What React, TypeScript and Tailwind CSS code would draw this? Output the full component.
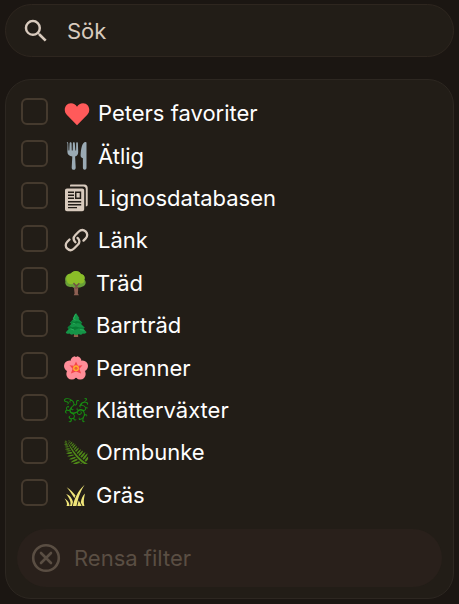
import type { ReactNode } from "react";
import { GiCurlingVines, GiFern, GiHighGrass } from "react-icons/gi";
import { MdSearch } from "react-icons/md";

function Heart() {
  return (
    <svg viewBox="0 0 26 26" className="size-[27px]" fill="#ff5a5a">
      <path d="M13.5 24.2 3.6 14.2C-.1 10.3 1.8 3.2 7.7 3.1c2.600 0 4.500 1.300 5.800 3.300 1.300-2 3.200-3.300 5.800-3.300 5.900.1 7.800 7.200 4.100 11.100Z" />
    </svg>
  );
}

function Cutlery() {
  return (
    <svg viewBox="0 0 26 28" className="h-[28px] w-[26px]" fill="#9aaab4">
      <path d="M4.300.3c.7 0 .9.500.9 1.200l.3 7h.8L6.600 1.500C6.600.8 7 .3 7.600.3s1 .5 1 1.200l.2 7h.9l.2-7c0-.7.300-1.200 1-1.200.600 0 .9.500.9 1.200l.6 7h.7l.1-7c0-.7.3-1.200.8-1.200.600 0 .9.500.9 1.200l.3 8.500c0 2.500-1.200 3.900-3.100 4.500l.6 11c0 1.500-.7 2.300-2 2.300s-2-.8-2-2.300l.6-11c-2.900-.600-4.900-2-4.900-4.500l.1-8.500C3.500.8 3.800.3 4.300.3Z" />
      <path d="M22.600 0c.5 0 .9.400.9 1v24.800c0 1.300-.7 2-1.800 2s-1.800-.7-1.800-2v-9.600c-1.700-.5-2.500-1.500-2.300-3.200C18 7 19 0 22.600 0Z" />
    </svg>
  );
}

function Papers() {
  return (
    <svg viewBox="0 0 26 28" className="h-[28px] w-[26px]" fill="#d8cabd">
      <path d="M7 1.500C7 1 7.500.5 8 .5h13.500c1.900 0 3.200 1.300 3.200 3.200v17.100c0 1-.8 1.700-1.900 1.700V5c0-1.500-1-2.500-2.500-2.500H7Z" />
      <path fillRule="evenodd" d="M4 4.500h15.200c1.200 0 2 .8 2 2v18.800c0 1.200-.8 2-2 2H4c-1.200 0-2-.8-2-2V6.500c0-1.200.8-2 2-2Zm1 3v1.500h6V7.500Zm0 3v1.500h6v-1.500Zm0 3v1.500h6v-1.500Zm7-6v7.500h6.200V7.500Zm1.500 1.500h3.200v4.500h-3.200Zm-8.500 8v1.500h13.200v-1.500Zm0 3v1.500h13.200v-1.500Zm0 3v1.300h9v-1.300Z" />
    </svg>
  );
}

function Chain() {
  return (
    <svg viewBox="0 0 26 26" className="size-[26px]" fill="none" stroke="#d8cabd" strokeWidth="2.300" strokeLinecap="round">
      <path d="M12.400 15.200C10.200 13 10 10.600 12.200 8.300l3.400-3.500c2.200-2.200 5-2.200 7-.4 2.100 2 2.100 4.900.1 7L20.500 13.600" />
      <path d="M14.600 10.900c2.300 2.200 2.400 4.700.2 6.900l-3.500 3.500c-2.200 2.200-5 2.300-7 .4-2.100-2-2.100-4.900 0-7l2.200-2.200" />
    </svg>
  );
}

function Oak() {
  return (
    <svg viewBox="0 0 26 26" className="size-[26px]">
      <path d="M10.500 14h5l-.6 9.500 1 1.700h-5.200l.9-1.700Z" fill="#8d5f52" />
      <path d="M12 18 7 14.500M14 18l5-4" stroke="#765044" strokeWidth="1.500" />
      <path d="M8 3.600c2-3.700 8.200-3.300 9.900.3 3.300.5 4.500 3.400 3.600 5.700 2.500 2.700.8 6.900-2.500 7.200-1.800 1.400-4 .7-5-.6-1.500 1.600-3.700 1.700-5 .5C5.600 18 1.500 15.600 2.400 11.500 1.200 7.500 4 3.700 8 3.600Z" fill="#689f38" />
      <path d="M8 3.600c2-3.700 8.200-3.300 9.900.3 3.300.5 4.500 3.400 3.200 5.700.7 2.800-1.800 4.700-4.300 3.600-1.900 1.600-4.400 1.300-5.600-.3-2.300 2.300-6.200 1.700-7.200-1.400C2 7.500 4 3.700 8 3.600Z" fill="#8abd28" />
      <path d="m13 16-2.500-3M13.500 16l2.800-2.700M13 15v4" stroke="#765044" strokeWidth="1.300" />
    </svg>
  );
}

function Fir() {
  return (
    <svg viewBox="0 0 26 26" className="size-[26px]">
      <path d="M11.200 19h3.600l.4 6h-4.400Z" fill="#8d6048" />
      <path d="m13 1 3.500 5.300-1 .5 3.800 4-1.500.9 4 4.100-1.600.9 3.300 3.400c-.3 1.600-2.300 2-3.600 1.300-1.200 1.500-2.900 1.600-4 .6-1.600 1.500-4 1.400-5.400 0-1.500 1-3.100.8-4-.5-1.400.7-3.400.2-3.700-1.300l3.200-3.500-1.600-.9 4-4.100-1.500-.9 3.700-4-1-.5Z" fill="#159447" />
      <path d="m8 8.800 3.200 1 2.500-.8 3 .8 2.600 1-1.500.9-3-.7-3.300 1.200-3.100-.9Zm-2 5 3.200 1.500 3.700-.9 3.800 1.200 5.100.2-1.500 1-4.800-.3-3.800 1.400-3.700-1.300-3.400.1Z" fill="#087c35" />
      <path d="m12.500 2-2 5 2 .8m-3 3.200 3 1m-5 4.800 3.500 1.300m6-.5 4.500.7" fill="none" stroke="#28ae59" />
    </svg>
  );
}

function Blossom() {
  return (
    <svg viewBox="0 0 26 26" className="size-[26px]">
      <g fill="#ff8d98">
        <circle cx="13" cy="6.500" r="5.500" />
        <circle cx="19.500" cy="11" r="5.500" />
        <circle cx="17.200" cy="19" r="5.500" />
        <circle cx="8.800" cy="19" r="5.500" />
        <circle cx="6.500" cy="11" r="5.500" />
      </g>
      <path d="m13 6.500 2 4.200 4.500-.5-3.100 3.500 1.700 4.800L13 16.400l-5.100 2.100 1.700-4.800-3.100-3.500 4.500.5Z" fill="#f4434a" />
      <circle cx="13" cy="13.300" r="3" fill="#ffad2e" />
      <circle cx="13" cy="13.300" r="1.500" fill="#ef5e35" />
      <path d="m13 0-1 2h2Zm-1 23 1 2 1-2Z" fill="#221d17" />
    </svg>
  );
}

type Filter = { id: string; label: string; icon: ReactNode; wide?: boolean };

const filters: Filter[] = [
  { id: "favoriter", label: "Peters favoriter", icon: <Heart />, wide: true },
  { id: "atlig", label: "Ätlig", icon: <Cutlery />, wide: true },
  { id: "lignos", label: "Lignosdatabasen", icon: <Papers />, wide: true },
  { id: "lank", label: "Länk", icon: <Chain />, wide: true },
  { id: "trad", label: "Träd", icon: <Oak /> },
  { id: "barrtrad", label: "Barrträd", icon: <Fir /> },
  { id: "perenner", label: "Perenner", icon: <Blossom /> },
  { id: "klatter", label: "Klätterväxter", icon: <GiCurlingVines className="size-[26px] text-[#178c12]" /> },
  { id: "ormbunke", label: "Ormbunke", icon: <GiFern className="size-[26px] text-[#4f8a18]" /> },
  { id: "gras", label: "Gräs", icon: <GiHighGrass className="size-6 text-[#f0e579]" /> },
];

function FilterRow({ id, label, icon, wide }: Filter) {
  return (
    <div className="flex items-center">
      <input
        id={id}
        type="checkbox"
        className="size-[27px] shrink-0 appearance-none rounded-[6px] border-2 border-[#453a2e] checked:bg-[#d8cabd]"
      />
      <label htmlFor={id} className={`ml-[15px] flex items-center pt-1 ${wide ? "gap-2" : "gap-1.5"}`}>
        <span className="flex w-[27px] shrink-0" aria-hidden="true">{icon}</span>
        <span>{label}</span>
      </label>
    </div>
  );
}

export default function App() {
  return (
    <main className="flex min-h-screen flex-col gap-[22px] bg-[#1b1612] px-[5px] pt-1 pb-[5px] font-['Inter',sans-serif] text-[22px] leading-7 text-white">
      <label className="flex h-[53px] items-center gap-4 rounded-full border border-[#2e261f] bg-[#221d17] px-[15px] text-[#d8cabd]">
        <MdSearch className="size-[30px] shrink-0" aria-hidden="true" />
        <input
          type="search"
          aria-label="Sök"
          placeholder="Sök"
          className="min-w-0 flex-1 bg-transparent outline-none placeholder:text-[#d8cabd]"
        />
      </label>
      <section className="flex flex-col rounded-[26px] border border-[#2d2721] bg-[#221d17] px-[11px] pt-[10px] pb-[11px]">
        <div className="grid h-[424px] auto-rows-fr px-1">
          {filters.map((filter) => (
            <FilterRow key={filter.id} {...filter} />
          ))}
        </div>
        <button
          type="button"
          disabled
          className="mt-[15px] flex h-[58px] items-center gap-[13px] rounded-full bg-[#29201b] px-[14px] text-[#5a4e43]"
        >
          <svg viewBox="0 0 30 30" className="size-[30px]" fill="none" stroke="currentColor" strokeWidth="2.600" strokeLinecap="round" aria-hidden="true">
            <circle cx="15" cy="15" r="12.800" />
            <path d="m10 10 10 10M20 10 10 20" />
          </svg>
          Rensa filter
        </button>
      </section>
    </main>
  );
}
